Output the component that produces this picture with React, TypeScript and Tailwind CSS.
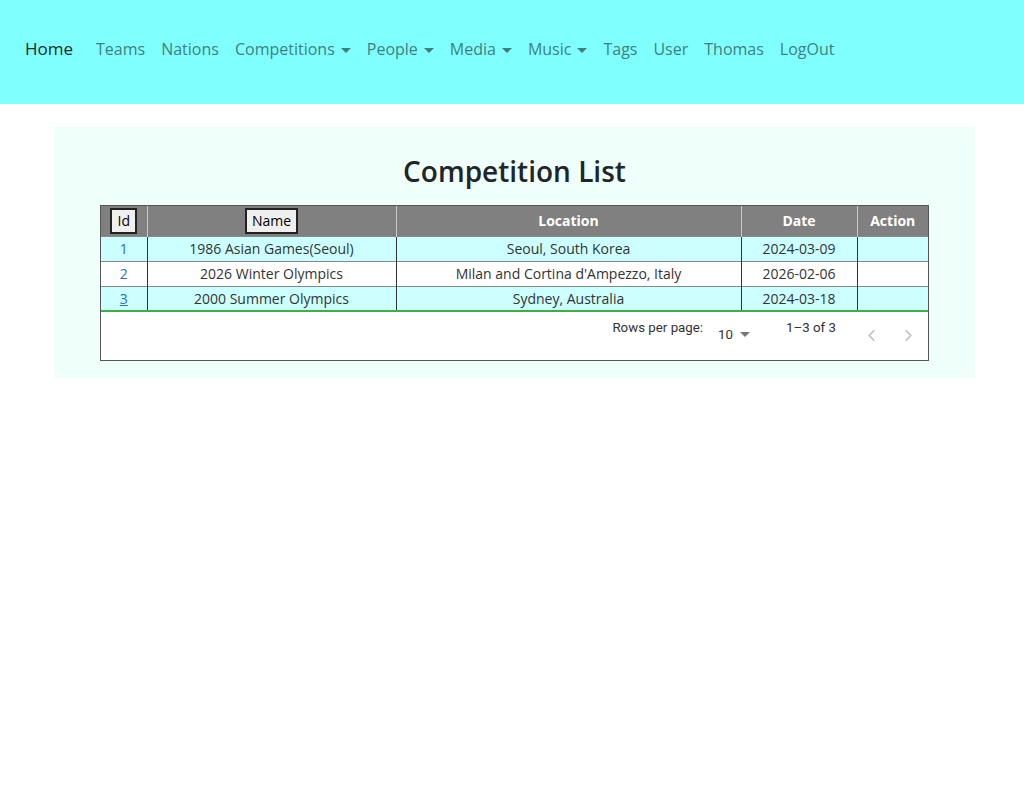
import { ChevronLeft, ChevronRight } from "lucide-react";

const rows = [
  { id: 1, name: "1986 Asian Games(Seoul)", location: "Seoul, South Korea", date: "2024-03-09" },
  { id: 2, name: "2026 Winter Olympics", location: "Milan and Cortina d'Ampezzo, Italy", date: "2026-02-06" },
  { id: 3, name: "2000 Summer Olympics", location: "Sydney, Australia", date: "2024-03-18" },
];

function Caret() {
  return <span className="ml-[6px] inline-block h-0 w-0 border-x-[5px] border-t-[5px] border-x-transparent border-t-current align-middle" />;
}

function NavBar() {
  const links: { label: string; drop?: boolean }[] = [
    { label: "Teams" },
    { label: "Nations" },
    { label: "Competitions", drop: true },
    { label: "People", drop: true },
    { label: "Media", drop: true },
    { label: "Music", drop: true },
    { label: "Tags" },
    { label: "User" },
    { label: "Thomas" },
    { label: "LogOut" },
  ];
  return (
    <nav className="flex h-[104px] items-center bg-[#80ffff] pb-[7px] pl-[25px]">
      <a className="mr-[15px] text-[17px] text-[#1a2a2a]">Home</a>
      <ul className="flex items-center">
        {links.map((l) => (
          <li key={l.label} className="px-[8px] text-[16px] text-[#3f7f7f]">
            {l.label}
            {l.drop && <Caret />}
          </li>
        ))}
      </ul>
    </nav>
  );
}

export default function App() {
  return (
    <div className="min-h-[800px] bg-white font-['Open_Sans',sans-serif]">
      <NavBar />
      <div className="ml-[54px] mt-[23px] w-[921px] bg-[#effffa] px-[46px] pb-[17px] pt-[24px]">
        <h2 className="mb-[14px] text-center text-[28px] leading-[40px] font-semibold text-[#212529]">Competition List</h2>
        <div className="border border-[#555] bg-white">
          <table className="w-full border-collapse text-[14px] text-[#333]">
            <thead>
              <tr className="h-[30px] bg-[#808080] text-white">
                <th className="w-[46px] border-r border-[#c8c8c8] px-0 text-center font-normal">
                  <button className="h-[26px] w-[27px] border-2 border-[#222] bg-[#efefef] text-[14px] text-black">Id</button>
                </th>
                <th className="w-[249px] border-r border-[#c8c8c8] text-center font-normal">
                  <button className="h-[26px] border-2 border-[#222] bg-[#efefef] px-[5px] text-[14px] text-black">Name</button>
                </th>
                <th className="w-[345px] border-r border-[#c8c8c8] text-center font-bold">Location</th>
                <th className="w-[116px] border-r border-[#c8c8c8] text-center font-bold">Date</th>
                <th className="text-center font-bold">Action</th>
              </tr>
            </thead>
            <tbody>
              {rows.map((r, i) => (
                <tr
                  key={r.id}
                  className={
                    "h-[25px] border-t border-[#888] " +
                    (i % 2 === 0 ? "bg-[#ccffff]" : "bg-white") +
                    (i === rows.length - 1 ? " border-b-2 border-b-[#3cb043]" : "")
                  }
                >
                  <td className="border-r border-[#333] text-center">
                    <a className={"text-[#2f6fb8]" + (i === 2 ? " underline" : "")}>{r.id}</a>
                  </td>
                  <td className="border-r border-[#333] text-center">{r.name}</td>
                  <td className="border-r border-[#333] text-center">{r.location}</td>
                  <td className="border-r border-[#333] text-center">{r.date}</td>
                  <td></td>
                </tr>
              ))}
            </tbody>
          </table>
          <div className="flex h-[48px] items-start justify-end pr-[10px] font-['Roboto',sans-serif] text-[13.3px] text-[#333]">
            <span className="mt-[6px]">Rows per page:</span>
            <span className="ml-[15px] mt-[13px] flex items-center">
              10
              <span className="ml-[7px] inline-block h-0 w-0 border-x-[5px] border-t-[5px] border-x-transparent border-t-[#777]" />
            </span>
            <span className="ml-[36px] mt-[6px]">1–3 of 3</span>
            <span className="ml-[26px] mt-[14px] flex gap-[18px] text-[#bdbdbd]">
              <ChevronLeft size={19} strokeWidth={2} />
              <ChevronRight size={19} strokeWidth={2} />
            </span>
          </div>
        </div>
      </div>
    </div>
  );
}
